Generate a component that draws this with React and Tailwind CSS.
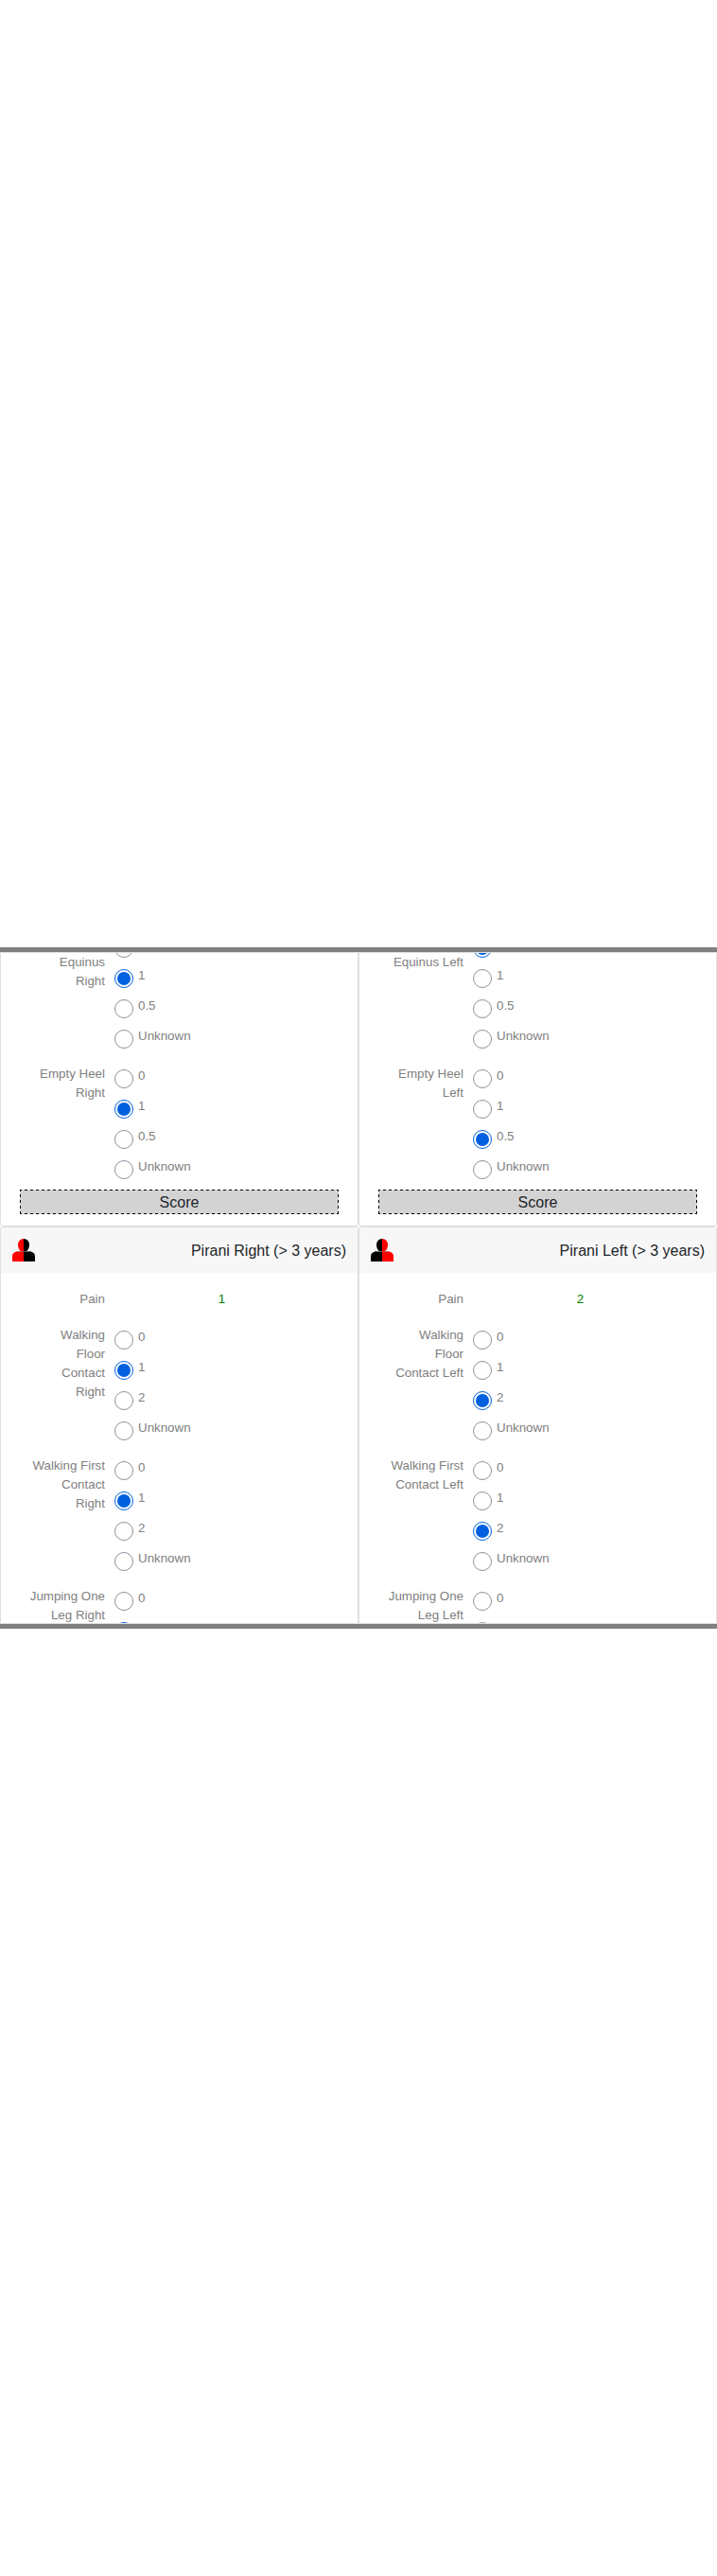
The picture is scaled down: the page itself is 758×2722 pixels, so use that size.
import React from "react";

function Radio({ checked }) {
  return (
    <svg className="h-5 w-5 shrink-0" viewBox="0 0 20 20" role="radio" aria-checked={checked}>
      <circle cx="10" cy="10" r="9.5" fill="#fff" stroke={checked ? "#0060df" : "#8f8f9d"} />
      {checked && <circle cx="10" cy="10" r="7" fill="#0060df" />}
    </svg>
  );
}

function Label({ lines }) {
  return (
    <div className="w-[110px] shrink-0 text-right whitespace-nowrap">
      {lines.map((line) => (
        <div key={line}>{line}</div>
      ))}
    </div>
  );
}

function Question({ lines, options, value, offset = "" }) {
  return (
    <div className="flex h-[132px] shrink-0 gap-[10px]">
      <div className={offset}>
        <Label lines={lines} />
      </div>
      <div className="flex flex-col gap-3 pt-[5px]">
        {options.map((option, index) => (
          <div key={index} className="flex h-5 gap-[5px]">
            <Radio checked={index === value} />
            {option && <span className="-mt-[3px]">{option}</span>}
          </div>
        ))}
      </div>
    </div>
  );
}

function Person({ left, right }) {
  return (
    <svg className="h-6 w-6" viewBox="0 0 24 24">
      <path d="M12 0C8 0 6 3 6 6.500C6 9.800 7.500 12.300 9.200 13.300H5C2.300 13.800 0 15.800 0 18V24H12Z" fill={left} />
      <path d="M12 0C16 0 18 3 18 6.500C18 9.800 16.500 12.300 14.800 13.300H19C21.700 13.800 24 15.800 24 18V24H12Z" fill={right} />
      <path d="M6.500 13.500H17.500" stroke="#8a8080" strokeWidth="0.700" />
    </svg>
  );
}

const early = ["0", "1", "0.5", "Unknown"];
const earlyClipped = ["", "1", "0.5", "Unknown"];
const late = ["0", "1", "2", "Unknown"];
const lateClipped = ["0", ""];

const dashX = "repeating-linear-gradient(90deg,#000 0 2px,transparent 2px 5px,#000 5px 6px)";
const dashY = "repeating-linear-gradient(180deg,#000 0 2px,transparent 2px 5px,#000 5px 6px)";
const dashed = {
  backgroundImage: `${dashX},${dashX},${dashY},${dashY}`,
  backgroundSize: "100% 1px,100% 1px,1px 100%,1px 100%",
  backgroundPosition: "top,bottom,left,right",
  backgroundRepeat: "no-repeat",
};

function Side({ side, colors, equinus, heel, equinusLines, heelLines, pain, floor, first, jump, floorLines, firstLines, jumpLines }) {
  return (
    <div className="flex h-full w-[379px] flex-col">
      <div className="flex h-[290px] shrink-0 flex-col rounded-b-[3px] border border-[#dfdfdf]">
        <div className="flex h-[250px] shrink-0 flex-col justify-end gap-[6px] overflow-hidden">
          <Question lines={equinusLines} options={earlyClipped} value={equinus} offset="pt-5" />
          <Question lines={heelLines} options={early} value={heel} />
        </div>
        <div
          className="mx-5 h-[26px] shrink-0 bg-[#d3d3d3] pt-[2px] text-center text-base text-[#212529]"
          style={dashed}
        >
          Score
        </div>
      </div>
      <div className="flex min-h-0 flex-1 flex-col overflow-hidden rounded-t-[3px] border border-[#dfdfdf]">
        <div className="flex h-12 shrink-0 items-center justify-between bg-[#f7f7f7] px-3 text-base text-[#212529]">
          <Person left={colors[0]} right={colors[1]} />
          <span className="pt-[2px]">{`Pirani ${side} (> 3 years)`}</span>
        </div>
        <div className="my-[18px] flex shrink-0 gap-[10px]">
          <Label lines={["Pain"]} />
          <span className="w-[227px] text-center text-[#008000]">{pain}</span>
        </div>
        <div className="flex min-h-0 flex-col gap-[6px]">
          <Question lines={floorLines} options={late} value={floor} />
          <Question lines={firstLines} options={late} value={first} />
          <Question lines={jumpLines} options={lateClipped} value={jump} />
        </div>
      </div>
    </div>
  );
}

export default function App() {
  return (
    <div className="h-[2722px] w-[758px] bg-white pt-[1001px] font-['Liberation_Sans',Arial,sans-serif] text-[13.333px] leading-5 text-[#808080]">
      <div className="flex h-[720px] overflow-hidden border-y-[5px] border-[#808080]">
        <Side
          side="Right"
          colors={["#ff0000", "#000000"]}
          equinusLines={["Equinus", "Right"]}
          equinus={1}
          heelLines={["Empty Heel", "Right"]}
          heel={1}
          pain="1"
          floorLines={["Walking", "Floor", "Contact", "Right"]}
          floor={1}
          firstLines={["Walking First", "Contact", "Right"]}
          first={1}
          jumpLines={["Jumping One", "Leg Right"]}
          jump={1}
        />
        <Side
          side="Left"
          colors={["#000000", "#ff0000"]}
          equinusLines={["Equinus Left"]}
          equinus={0}
          heelLines={["Empty Heel", "Left"]}
          heel={2}
          pain="2"
          floorLines={["Walking", "Floor", "Contact Left"]}
          floor={2}
          firstLines={["Walking First", "Contact Left"]}
          first={2}
          jumpLines={["Jumping One", "Leg Left"]}
          jump={2}
        />
      </div>
    </div>
  );
}
